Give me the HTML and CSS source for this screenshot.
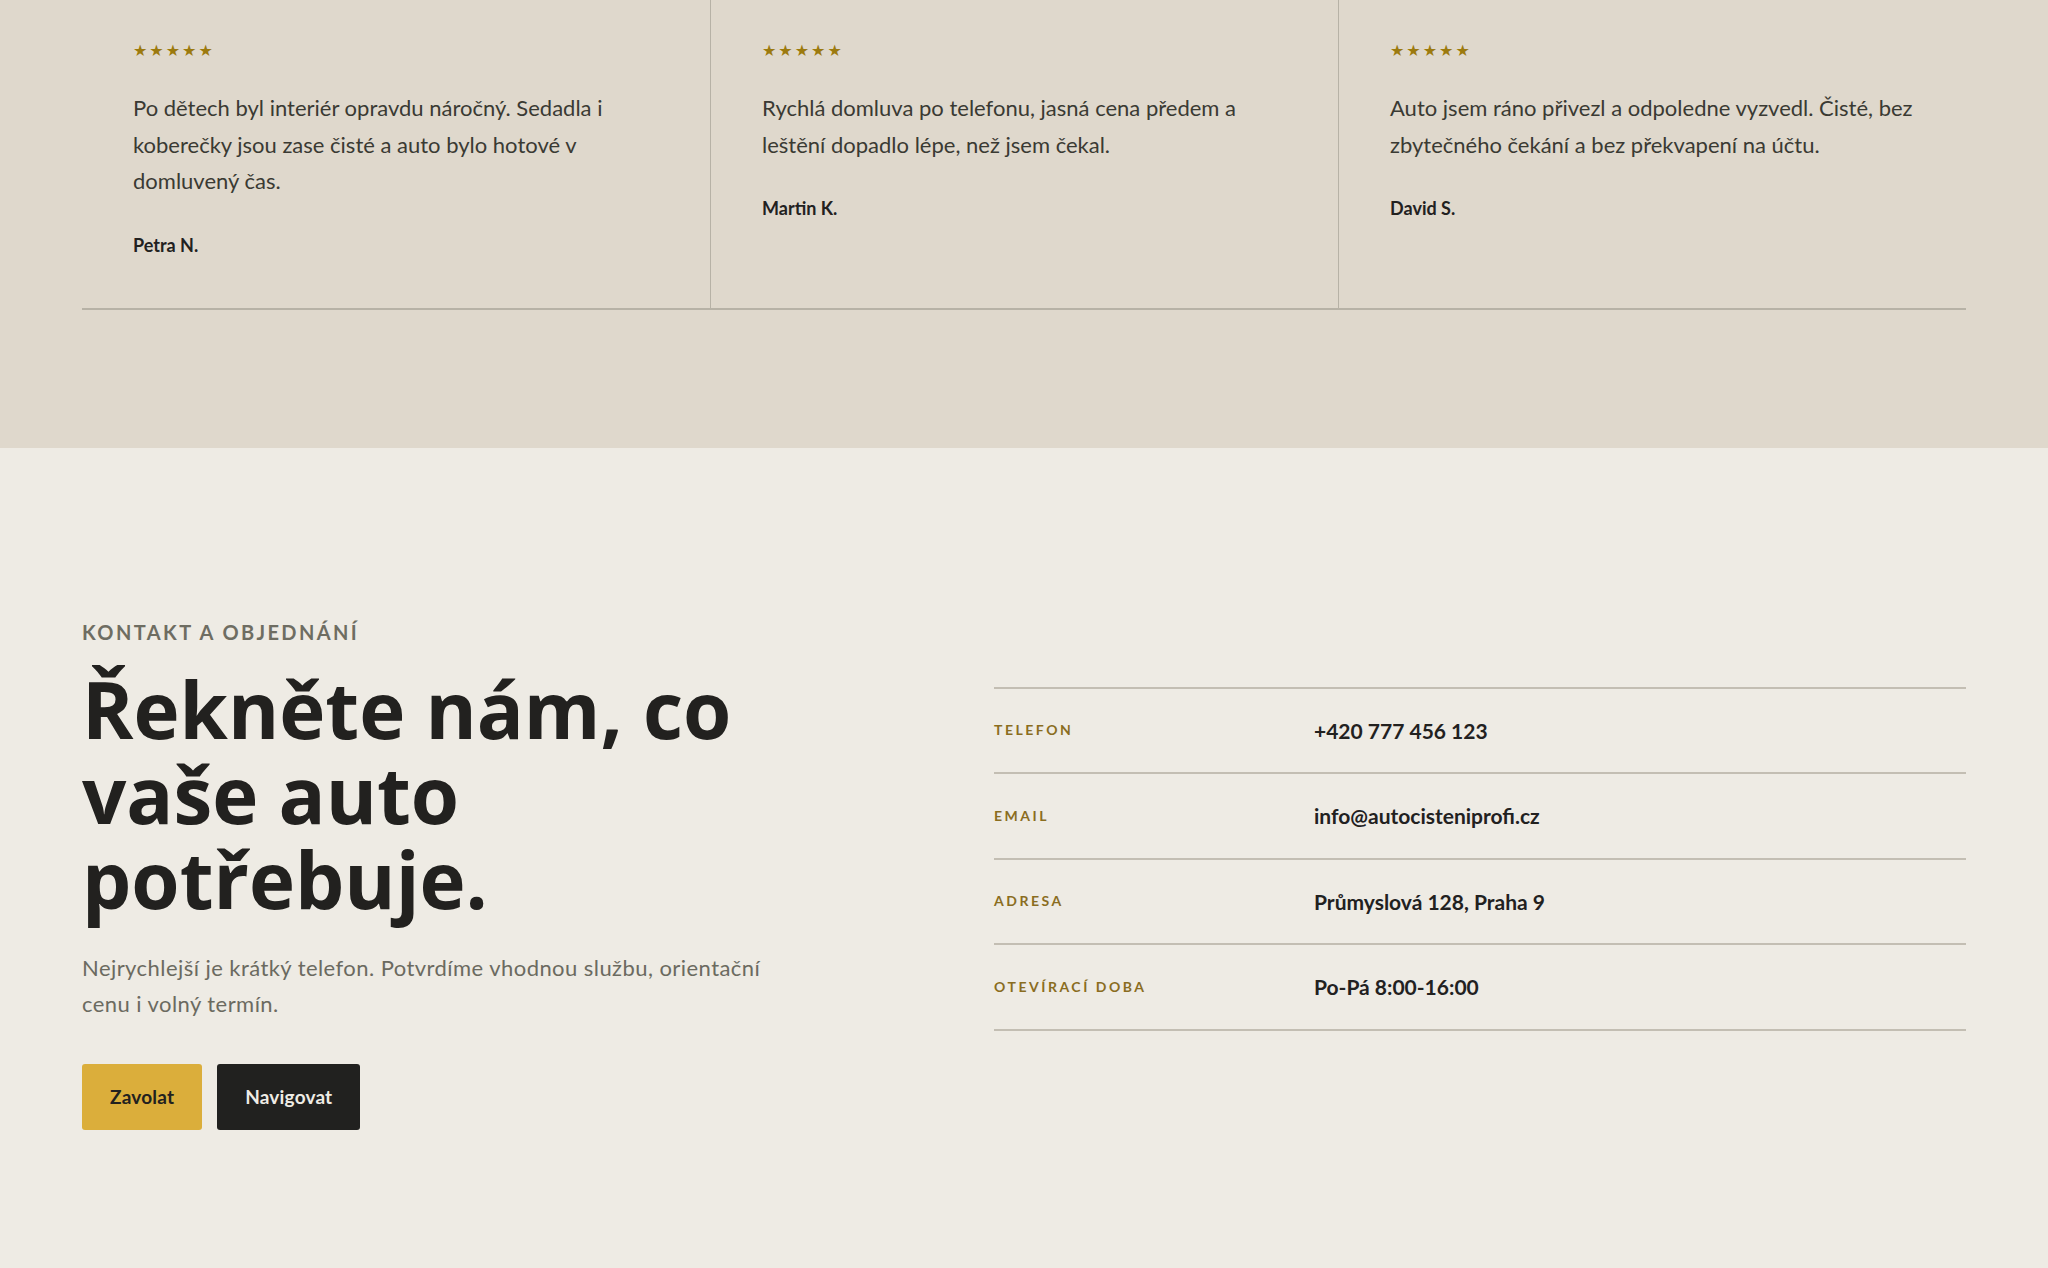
FILE: index.html
```html
<!DOCTYPE html>
<html lang="cs">
<head>
  <meta charset="UTF-8" />
  <meta name="viewport" content="width=device-width, initial-scale=1.0" />
  <title>Autočištění Profi – Kontakt</title>
  <link rel="stylesheet" href="styles.css">
</head>
<body>
  <section class="reviews">
    <div class="wrap">
      <div class="review-grid">
        <article class="review">
          <div class="stars">★★★★★</div>
          <p>Po dětech byl interiér opravdu náročný. Sedadla i koberečky jsou zase čisté a auto bylo hotové v domluvený čas.</p>
          <strong class="author">Petra N.</strong>
        </article>
        <article class="review">
          <div class="stars">★★★★★</div>
          <p>Rychlá domluva po telefonu, jasná cena předem a leštění dopadlo lépe, než jsem čekal.</p>
          <strong class="author">Martin K.</strong>
        </article>
        <article class="review">
          <div class="stars">★★★★★</div>
          <p>Auto jsem ráno přivezl a odpoledne vyzvedl. Čisté, bez zbytečného čekání a bez překvapení na účtu.</p>
          <strong class="author">David S.</strong>
        </article>
      </div>
    </div>
  </section>

  <section class="contact">
    <div class="wrap contact-grid">
      <div class="contact-intro">
        <p class="kicker">Kontakt a objednání</p>
        <h2>Řekněte nám, co vaše auto potřebuje.</h2>
        <p class="lead">Nejrychlejší je krátký telefon. Potvrdíme vhodnou službu, orientační cenu i volný termín.</p>
        <div class="actions">
          <a href="#" class="btn btn-gold">Zavolat</a>
          <a href="#" class="btn btn-dark">Navigovat</a>
        </div>
      </div>

      <dl class="contact-list">
        <div class="contact-row">
          <dt>Telefon</dt>
          <dd>+420 777 456 123</dd>
        </div>
        <div class="contact-row">
          <dt>Email</dt>
          <dd>info@autocisteniprofi.cz</dd>
        </div>
        <div class="contact-row">
          <dt>Adresa</dt>
          <dd>Průmyslová 128, Praha 9</dd>
        </div>
        <div class="contact-row">
          <dt>Otevírací doba</dt>
          <dd>Po-Pá 8:00-16:00</dd>
        </div>
      </dl>
    </div>
  </section>
</body>
</html>
```

FILE: styles.css
```css
/* Reset & Base */
* { margin: 0; padding: 0; box-sizing: border-box; }
body { font-family: "Lato", "Liberation Sans", sans-serif; background-color: #eeebe4; color: #22211f; }
a { text-decoration: none; }
.wrap { padding: 0 82px; }

/* Reviews */
.reviews { background: #dfd8cc; padding-bottom: 138px; }
.review-grid { display: grid; grid-template-columns: repeat(3, 1fr); border-bottom: 2px solid #b7b2a6; }
.review { padding: 43px 43px 51px 51px; }
.review + .review { border-left: 1px solid #b7b2a6; }
.stars { font-family: "DejaVu Sans", sans-serif; font-size: 16px; line-height: 1; letter-spacing: 2px; color: #9c7a0e; }
.review p { margin-top: 31px; font-size: 22px; line-height: 36.6px; color: #3a3a33; }
.author { display: block; margin-top: 33px; font-size: 18px; line-height: 24px; font-weight: 700; color: #22211f; }

/* Contact */
.contact { padding: 169px 0 138px; }
.contact-grid { display: grid; grid-template-columns: 1fr 972px; gap: 112px; align-items: start; }
.kicker { font-size: 20px; line-height: 30px; font-weight: 700; letter-spacing: 0.12em; text-transform: uppercase; color: #6e6d62; }
.contact-intro h2 { margin-top: 20px; font-family: "Open Sans", "Lato", sans-serif; font-size: 78px; line-height: 85px; font-weight: 700; color: #22211f; }
.lead { max-width: 720px; margin-top: 28px; font-size: 22px; line-height: 36.6px; letter-spacing: 0.02em; color: #6b6a60; }

/* Buttons */
.actions { display: flex; gap: 15px; margin-top: 41px; }
.btn { display: inline-flex; align-items: center; height: 66px; padding: 0 28px; border-radius: 3px; font-size: 19px; font-weight: 700; letter-spacing: 0.01em; }
.btn-gold { background-color: #dbae3b; color: #22211f; }
.btn-dark { background-color: #21211f; color: #efece5; }

/* Contact list */
.contact-list { margin-top: 70px; border-top: 2px solid #c3beb3; }
.contact-row { display: grid; grid-template-columns: 320px 1fr; align-items: center; padding: 30px 0 29px; border-bottom: 2px solid #c3beb3; }
.contact-row dt { font-size: 14px; font-weight: 700; letter-spacing: 0.18em; text-transform: uppercase; color: #8a6d1f; margin-top: -3px; }
.contact-row dd { font-size: 21px; line-height: 24.5px; font-weight: 700; color: #22211f; }
```
